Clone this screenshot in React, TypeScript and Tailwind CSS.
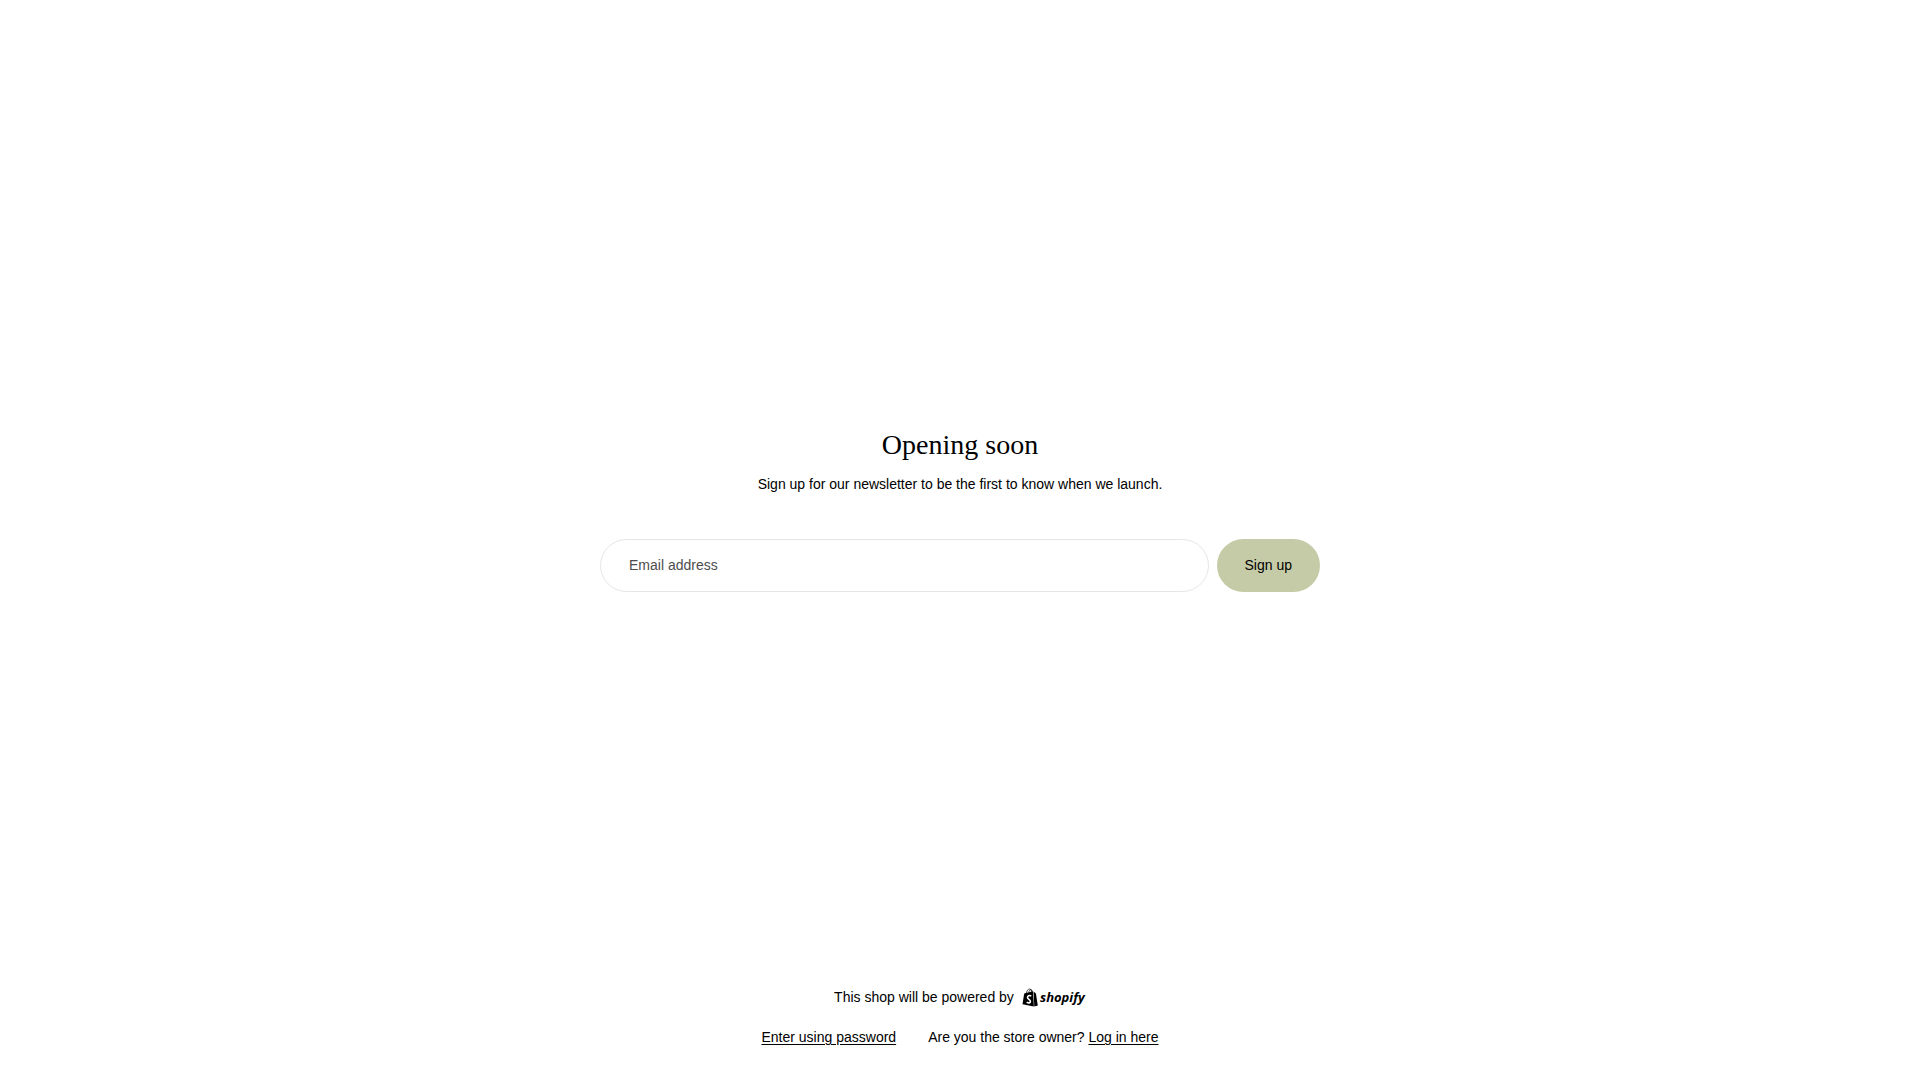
import { FormEvent } from "react";

function ShopifyLogo() {
  return (
    <svg
      viewBox="0 -1 64 20"
      className="h-5 w-16 shrink-0 overflow-visible"
      role="img"
      aria-label="Shopify"
    >
      {/* bag */}
      <path d="M2.2 5.6 10.9 3.2 11.900 18.500 .5 16.300z" fill="currentColor" />
      <path d="M11.500 3.400 13.900 5.500 15.800 17.500 12.300 18.400z" fill="currentColor" />
      <path
        d="M4.400 5.200c.3-2.400 1.700-4.200 3.200-4.200 1.400 0 2.100 1.500 2.200 3.200M6.700 4.700c.3-1.700 1.100-3 2.200-3 .8 0 1.300.8 1.500 1.900"
        fill="none"
        stroke="currentColor"
        strokeWidth=".7"
      />
      <path
        d="M9.300 8C7.400 7.100 5.500 7.700 5.500 9.400c0 1.900 2.900 1.900 2.900 4 0 1.700-2 2-3.700.7"
        fill="none"
        stroke="#fff"
        strokeWidth="1.600"
      />
      <text
        x="18"
        y="14"
        fill="currentColor"
        className="font-['Open_Sans',sans-serif] text-[13px] font-bold italic"
      >
        shopify
      </text>
    </svg>
  );
}

export default function App() {
  const handleSubmit = (e: FormEvent) => e.preventDefault();

  return (
    <div className="flex min-h-screen flex-col bg-white font-['Liberation_Sans',sans-serif] text-sm leading-[22px] text-black">
      <main className="flex flex-1 flex-col items-center justify-center px-5 pt-[30px]">
        <h1 className="text-center font-['Liberation_Serif',serif] text-[28px] leading-10">
          Opening soon
        </h1>
        <p className="mt-2 text-center">
          Sign up for our newsletter to be the first to know when we launch.
        </p>

        <form onSubmit={handleSubmit} className="mt-11 flex w-full max-w-[720px] gap-2">
          <input
            type="email"
            aria-label="Email address"
            placeholder="Email address"
            className="h-[53px] min-w-0 flex-1 rounded-full border border-[#e6e6e6] px-7 outline-none placeholder:text-[#4d4d4d]"
          />
          <button type="submit" className="h-[53px] rounded-full bg-[#c5cba6] px-7">
            Sign up
          </button>
        </form>
      </main>

      <footer className="flex flex-col items-center gap-[18px] px-5 pb-8">
        <p className="flex items-center gap-2">
          This shop will be powered by
          <a href="https://www.shopify.com">
            <ShopifyLogo />
          </a>
        </p>
        <div className="flex flex-wrap justify-center gap-x-8">
          <a href="#password" className="underline underline-offset-2">
            Enter using password
          </a>
          <p>
            Are you the store owner?{" "}
            <a href="/admin" className="underline underline-offset-2">
              Log in here
            </a>
          </p>
        </div>
      </footer>
    </div>
  );
}
